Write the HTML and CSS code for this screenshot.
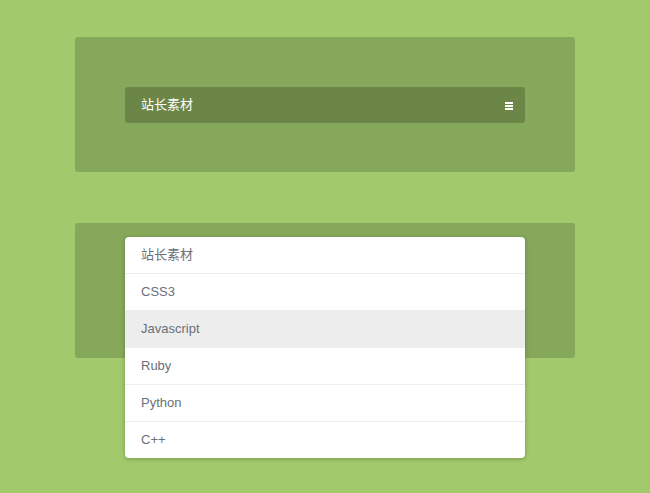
FILE: index.html
```html
<!DOCTYPE html>
<html lang="en">
<head>
  <meta charset="UTF-8">
  <title>Dropdown</title>
  <link rel="stylesheet" href="styles.css">
</head>
<body>
  <div class="stage">
    <div class="panel">
      <div class="select">
        <span class="select-label">站长素材</span>
        <span class="burger"><i></i><i></i><i></i></span>
      </div>
    </div>

    <div class="panel panel-open">
      <ul class="menu">
        <li class="cjk">站长素材</li>
        <li>CSS3</li>
        <li class="active">Javascript</li>
        <li>Ruby</li>
        <li>Python</li>
        <li>C++</li>
      </ul>
    </div>
  </div>
</body>
</html>
```

FILE: styles.css
```css
html, body {
  min-height: 493px;
}
body {
  margin: 0;
  background: #a2c96b;
  font-family: "Liberation Sans", Arial, "Noto Sans CJK SC", sans-serif;
  font-size: 13px;
}
.stage {
  width: 500px;
  margin: 0 auto;
  padding: 37px 0 140px;
  display: flex;
  flex-direction: column;
  gap: 51px;
}
.panel {
  background: #86a85a;
  border-radius: 3px;
  padding: 50px 50px 49px;
  position: relative;
}
.select {
  height: 36px;
  background: #6c8648;
  border-radius: 3px;
  display: flex;
  align-items: center;
  justify-content: space-between;
  padding: 0 12px 0 16px;
  color: #fff;
}
.select-label {
  font-family: "Noto Sans CJK SC", sans-serif;
  font-size: 13px;
  line-height: 18px;
  margin-top: -3px;
}
.burger {
  display: flex;
  flex-direction: column;
  gap: 1px;
  width: 8px;
  margin-top: 1px;
}
.burger i {
  display: block;
  height: 2px;
  background: #fff;
}
.panel-open {
  height: 36px;
}
.menu {
  position: absolute;
  top: 14px;
  left: 50px;
  right: 50px;
  margin: 0;
  padding: 0;
  list-style: none;
  background: #fff;
  border-radius: 4px;
  box-shadow: 0 1px 4px rgba(0, 0, 0, 0.25);
  overflow: hidden;
}
.menu li {
  height: 36px;
  line-height: 36px;
  padding-left: 16px;
  color: #6a7078;
  border-top: 1px solid #ececec;
}
.menu li:first-child {
  border-top: none;
}
.menu li.cjk {
  font-family: "Noto Sans CJK SC", sans-serif;
  line-height: 33px;
}
.menu li.active {
  background: #ededed;
}
```
